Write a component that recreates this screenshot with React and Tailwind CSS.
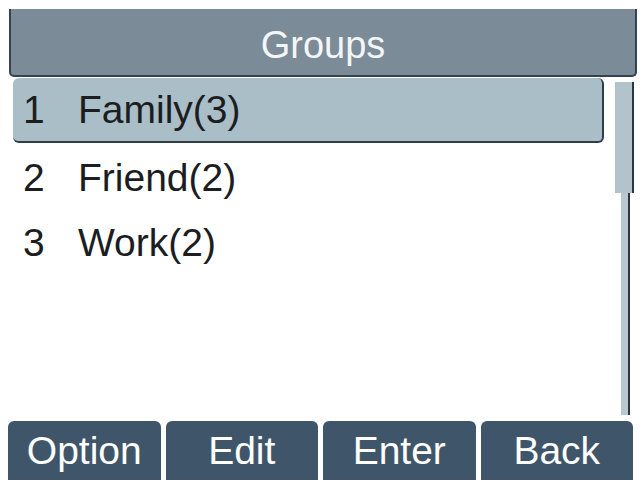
import React from 'react';

const groups = [
  { no: 1, name: 'Family(3)' },
  { no: 2, name: 'Friend(2)' },
  { no: 3, name: 'Work(2)' },
];

const softkeys = ['Option', 'Edit', 'Enter', 'Back'];

export default function App() {
  const selected = 0;

  return (
    <div className="w-[643px] h-[484px] bg-white flex flex-col overflow-hidden font-['Liberation_Sans',Arial,sans-serif]">
      {/* title bar */}
      <div className="mt-[9px] ml-[9px] mr-[6px] h-[68px] shrink-0 bg-[#7b8b97] border-l-2 border-r-2 border-b-2 border-[#33434f] rounded-b-[5px] flex items-center justify-center">
        <span className="text-[38px] leading-none text-[#f3f5f7] pt-[6px]">Groups</span>
      </div>

      <div className="flex-1 flex mt-[1px]">
        {/* list */}
        <div className="flex-1 flex flex-col pl-[13px] pr-[11px]">
          {groups.map((g, idx) => (
            <div
              key={g.no}
              className={`h-[65px] flex items-center text-[39px] leading-none text-[#1b1d1f] ${
                idx === selected
                  ? 'bg-[#aabec8] border-r-2 border-b-2 border-[#2f3d47] rounded-[6px]'
                  : 'pt-[3px]'
              }`}
            >
              <span className="w-[65px] pl-[10px]">{g.no}</span>
              <span>{g.name}</span>
            </div>
          ))}
        </div>

        {/* scrollbar */}
        <div className="w-[28px] flex flex-col pt-[4px] pb-[6px]">
          <div className="w-[19px] h-[111px] bg-[#b3c3cb] border-r-2 border-[#2a3640] shrink-0" />
          <div className="ml-[6px] w-[9px] flex-1 bg-[#b9c7ce] border-r-2 border-[#2a3640]" />
        </div>
      </div>

      {/* softkeys */}
      <div className="h-[59px] mb-[4px] ml-[8px] mr-[10px] grid grid-cols-4 gap-[5px] shrink-0">
        {softkeys.map((k) => (
          <div
            key={k}
            className="bg-[#3f566a] rounded-t-[6px] flex items-center justify-center text-[39px] leading-none text-white"
          >
            {k}
          </div>
        ))}
      </div>
    </div>
  );
}
